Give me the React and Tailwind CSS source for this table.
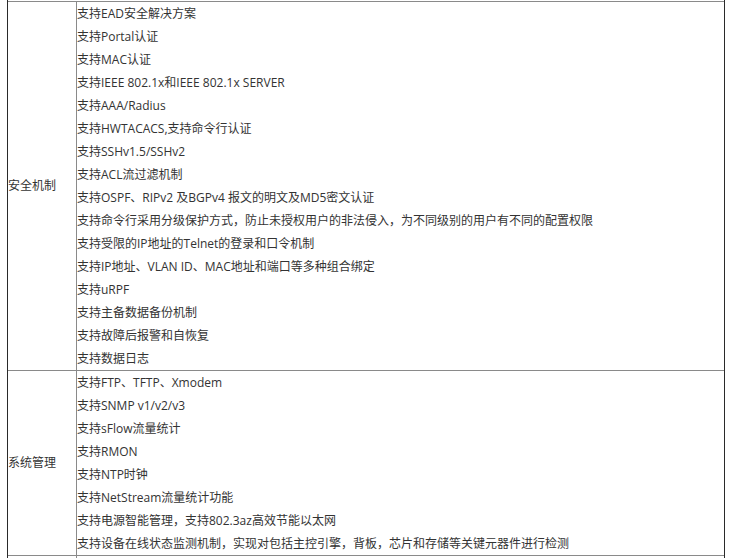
import React from "react";

const sections = [
  {
    title: "安全机制",
    items: [
      "支持EAD安全解决方案",
      "支持Portal认证",
      "支持MAC认证",
      "支持IEEE 802.1x和IEEE 802.1x SERVER",
      "支持AAA/Radius",
      "支持HWTACACS,支持命令行认证",
      "支持SSHv1.5/SSHv2",
      "支持ACL流过滤机制",
      "支持OSPF、RIPv2 及BGPv4 报文的明文及MD5密文认证",
      "支持命令行采用分级保护方式，防止未授权用户的非法侵入，为不同级别的用户有不同的配置权限",
      "支持受限的IP地址的Telnet的登录和口令机制",
      "支持IP地址、VLAN ID、MAC地址和端口等多种组合绑定",
      "支持uRPF",
      "支持主备数据备份机制",
      "支持故障后报警和自恢复",
      "支持数据日志",
    ],
  },
  {
    title: "系统管理",
    items: [
      "支持FTP、TFTP、Xmodem",
      "支持SNMP v1/v2/v3",
      "支持sFlow流量统计",
      "支持RMON",
      "支持NTP时钟",
      "支持NetStream流量统计功能",
      "支持电源智能管理，支持802.3az高效节能以太网",
      "支持设备在线状态监测机制，实现对包括主控引擎，背板，芯片和存储等关键元器件进行检测",
    ],
  },
];

const Section = ({ title, items }) => (
  <div className="flex border-t border-[#8a8a8a]">
    <div className="w-[68px] shrink-0 flex items-center">{title}</div>
    <div className="flex-1 border-l border-[#8a8a8a]">
      {items.map((t, i) => (
        <div key={i} className="h-[23px] flex items-center whitespace-nowrap">
          {t}
        </div>
      ))}
    </div>
  </div>
);

export default function App() {
  return (
    <div
      className="w-[729px] h-[558px] bg-white overflow-hidden text-[12px] text-[#333]"
      style={{ fontFamily: '"Open Sans", "Noto Sans CJK SC", sans-serif' }}
    >
      <div className="ml-[7px] w-[718px] h-[558px] border-l border-r border-[#2a2a2a] pt-px">
        {sections.map((s) => (
          <Section key={s.title} title={s.title} items={s.items} />
        ))}
        <div className="flex border-t border-[#8a8a8a] h-[20px]">
          <div className="w-[68px] shrink-0" />
          <div className="flex-1 border-l border-[#8a8a8a]" />
        </div>
      </div>
    </div>
  );
}
